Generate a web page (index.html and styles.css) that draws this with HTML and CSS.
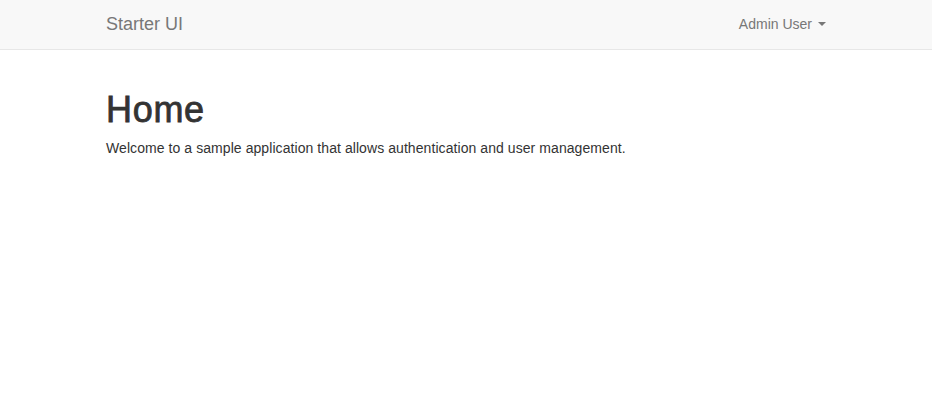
FILE: index.html
```html
<!DOCTYPE html>
<html lang="en">
<head>
<meta charset="utf-8">
<title>Starter UI</title>
<link rel="stylesheet" href="styles.css">
</head>
<body>
<nav class="navbar">
  <div class="container navbar-inner">
    <a class="brand" href="#">Starter UI</a>
    <a class="user-menu" href="#">Admin User <span class="caret"></span></a>
  </div>
</nav>
<main class="container content">
  <h1 class="title">Home</h1>
  <p class="lead-text">Welcome to a sample application that allows authentication and user management.</p>
</main>
</body>
</html>
```
FILE: styles.css
```css
* { box-sizing: border-box; }
html, body { margin: 0; padding: 0; }
body {
  font-family: "Liberation Sans", Arial, sans-serif;
  font-size: 14px;
  line-height: 1.42857;
  color: #333;
  background: #fff;
}
.container {
  width: 750px;
  margin: 0 auto;
  padding: 0 15px;
}
.navbar {
  background: #f8f8f8;
  border-bottom: 1px solid #e7e7e7;
  height: 50px;
  margin-bottom: 20px;
}
.navbar-inner {
  display: flex;
  justify-content: space-between;
  align-items: center;
  height: 48px;
}
.brand {
  font-size: 18px;
  line-height: 20px;
  color: #777;
  text-decoration: none;
}
.user-menu {
  font-size: 14px;
  line-height: 20px;
  color: #777;
  text-decoration: none;
  display: flex;
  align-items: center;
}
.caret {
  display: inline-block;
  width: 0;
  height: 0;
  margin-left: 6px;
  border-top: 4px solid #777;
  border-left: 4px solid transparent;
  border-right: 4px solid transparent;
}
.content { display: flow-root; }
.title {
  font-size: 36px;
  font-weight: 500;
  line-height: 1.1;
  margin: 20px 0 9px;
  color: #333;
  -webkit-text-stroke: 0.8px #333;
  letter-spacing: 0.7px;
}
.lead-text {
  margin: 0 0 10px;
  letter-spacing: 0.07px;
}
```
